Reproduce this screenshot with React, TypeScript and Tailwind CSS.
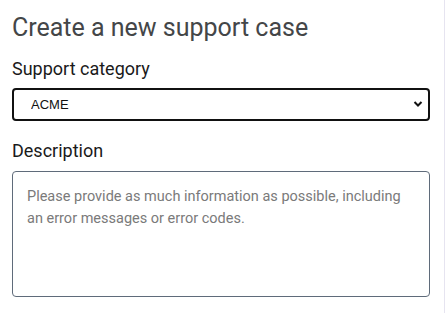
import React from 'react';

export default function App() {
    return (
        <div className="h-[313px] w-[445px] bg-white border-r border-[#e6e4f0]" style={{ fontFamily: 'Roboto, "Liberation Sans", sans-serif' }}>
            <div className="pl-3 pr-[14px] pt-[12px]">
                <h1 className="text-[25px] leading-[32px] text-[#444648] font-normal">Create a new support case</h1>
                <label className="block mt-[13px] text-[18px] leading-[24px] text-[#1a1a1a]">Support category</label>
                <div className="relative mt-[7px]">
                    <select
                        defaultValue="ACME"
                        className="appearance-none w-full h-[33px] rounded-[4px] border-2 border-[#111] bg-white pl-[17px] text-[13px] text-[#111] outline-none"
                        style={{ fontFamily: '"Liberation Sans", Arial, sans-serif' }}
                    >
                        <option>ACME</option>
                    </select>
                    <svg className="absolute right-[7px] top-[12px] pointer-events-none" width="10" height="8" viewBox="0 0 10 8">
                        <path d="M1.5 2 L5 5.5 L8.5 2" fill="none" stroke="#111" strokeWidth="2" />
                    </svg>
                </div>
                <label className="block mt-[18px] text-[18px] leading-[24px] text-[#1a1a1a]">Description</label>
                <textarea
                    className="block mt-[8px] w-full h-[126px] resize-none rounded-[4px] border border-[#5f6b7a] px-[14px] pt-[14px] pb-[10px] text-[14.5px] leading-[22px] text-[#111] placeholder:text-[#7a7a7a] outline-none"
                    placeholder="Please provide as much information as possible, including an error messages or error codes."
                />
            </div>
        </div>
    );
}
